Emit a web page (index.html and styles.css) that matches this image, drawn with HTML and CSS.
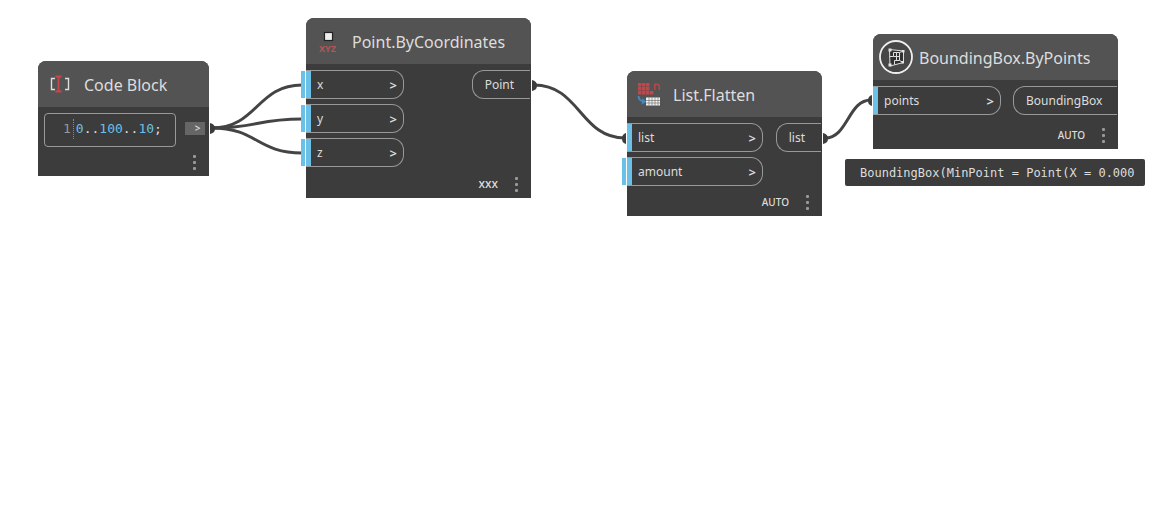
FILE: index.html
```html
<!DOCTYPE html>
<html lang="en">
<head>
<meta charset="utf-8">
<title>Graph</title>
<link rel="stylesheet" href="styles.css">
</head>
<body>
<main class="canvas">
  <svg class="wires" aria-hidden="true">
    <g class="wire">
      <path d="M212 128C257 128 257 85 302 85"/>
      <path d="M212 128C257 128 257 119 302 119"/>
      <path d="M212 128C257 128 257 153 302 153"/>
      <path d="M534 85C580 85 580 138 625 138"/>
      <path d="M825 138C848 138 848 100 871 100"/>
    </g>
    <g class="plug">
      <path d="M210 123q5 1 5 5.500t-5 5.500z"/>
      <path d="M532 80q5 1 5 5.500t-5 5.500z"/>
      <path d="M823 133q5 1 5 5.500t-5 5.500z"/>
      <path d="M626 133q-4 1-4 5.500t4 5.500z"/>
      <path d="M872 95q-4 1-4 5.500t4 5.500z"/>
    </g>
  </svg>

  <article class="node node-code">
    <header class="head">
      <svg class="icon" width="24" height="24" viewBox="0 0 24 24" aria-hidden="true">
        <path d="M7 6.500H3.500v11H7M17 6.500h3.500v11H17" fill="none" stroke="#ddd" stroke-width="1.400"/>
        <path d="M7.500 4.500h6M7.500 19.500h6M10.500 4.500v15" fill="none" stroke="#c8474a" stroke-width="1.800"/>
      </svg>
      <h2 class="title">Code Block</h2>
    </header>
    <div class="body">
      <div class="editor"><span class="line-no">1</span><code class="code"><b class="num">0</b>..<b class="num">100</b>..<b class="num">10</b>;</code></div>
      <button class="out-tab" aria-label="Output">&gt;</button>
    </div>
    <footer class="foot"><button class="more" aria-label="More"><i></i><i></i><i></i></button></footer>
  </article>

  <article class="node node-point">
    <header class="head">
      <svg class="icon" width="24" height="24" viewBox="0 0 24 24" aria-hidden="true">
        <rect x="8.500" y="3.500" width="8" height="8" fill="#eee" stroke="#222" stroke-width="1.200"/>
        <text x="3" y="23" class="xyz">XYZ</text>
      </svg>
      <h2 class="title">Point.ByCoordinates</h2>
    </header>
    <div class="body">
      <div class="ins">
        <div class="port in open"><span>x</span><span class="chevron">&gt;</span></div>
        <div class="port in open"><span>y</span><span class="chevron">&gt;</span></div>
        <div class="port in open"><span>z</span><span class="chevron">&gt;</span></div>
      </div>
      <div class="port out">Point</div>
    </div>
    <footer class="foot"><span class="lacing wide">xxx</span><button class="more" aria-label="More"><i></i><i></i><i></i></button></footer>
  </article>

  <article class="node node-flatten">
    <header class="head">
      <svg class="icon" width="24" height="24" viewBox="0 0 24 24" aria-hidden="true">
        <path fill="#c0474a" d="M1 1h3.400v3.400H1zM5 1h3.400v3.400H5zM9 1h3.400v3.400H9zM1 5h3.400v3.400H1zM5 5h3.400v3.400H5zM9 5h3.400v3.400H9zM1 9h3.400v3.400H1zM5 9h3.400v3.400H5zM9 9h3.400v3.400H9zM13 9h3.400v3.400H13z"/>
        <path d="M17.800 8V1.500M17.800 4Q18.300 2.200 20.200 2.200T22.300 4.500V8" fill="none" stroke="#b5484b" stroke-width="1.500"/>
        <path d="M1.500 14q.5 5 5 5.500" fill="none" stroke="#4387bd" stroke-width="2"/>
        <path d="M5.500 16L9.500 20L4.500 22.500z" fill="#4387bd"/>
        <path d="M9 15.500h14v8H9z" fill="#f2f2f2"/>
        <path d="M9 18.500h14M9 21h14M12 15.500v8M15 15.500v8M18 15.500v8M21 15.500v8" stroke="#777" stroke-width=".7"/>
      </svg>
      <h2 class="title">List.Flatten</h2>
    </header>
    <div class="body">
      <div class="ins">
        <div class="port in"><span>list</span><span class="chevron">&gt;</span></div>
        <div class="port in open"><span>amount</span><span class="chevron">&gt;</span></div>
      </div>
      <div class="port out">list</div>
    </div>
    <footer class="foot"><span class="lacing">AUTO</span><button class="more" aria-label="More"><i></i><i></i><i></i></button></footer>
  </article>

  <article class="node node-box">
    <header class="head">
      <svg class="icon" width="36" height="36" viewBox="0 0 36 36" aria-hidden="true">
        <circle cx="18" cy="18" r="16" fill="#464646" stroke="#eee" stroke-width="1.800"/>
        <g fill="none" stroke="#ddd" stroke-width="1">
          <path d="M11.500 10.500L25.500 12V23.500L12 27z" fill="#303030"/>
          <path d="M11.500 17.500h4v-4h6v8h-5v4M21.500 13.500L25.500 12M21.500 21.500L25.500 23.500M18.500 13.500v8M15.500 17.500h6"/>
        </g>
        <path d="M10.500 9.500h3v3h-3zM10.500 24.500h3v3h-3zM24 11h2.500v2.500h-2.500zM23.500 22h2.500v2.500h-2.500z" fill="#e4e4e4"/>
      </svg>
      <h2 class="title">BoundingBox.ByPoints</h2>
    </header>
    <div class="body">
      <div class="ins">
        <div class="port in"><span>points</span><span class="chevron">&gt;</span></div>
      </div>
      <div class="port out">BoundingBox</div>
    </div>
    <footer class="foot"><span class="lacing">AUTO</span><button class="more" aria-label="More"><i></i><i></i><i></i></button></footer>
  </article>

  <output class="preview">BoundingBox(MinPoint = Point(X = 0.000</output>
</main>
</body>
</html>
```
FILE: styles.css
```css
* { box-sizing: border-box; }

body {
  margin: 0;
  background: #fff;
  color: #ddd;
  font-family: "Noto Sans", sans-serif;
}

button {
  border: 0;
  padding: 0;
  color: inherit;
  font: inherit;
}

.canvas {
  position: relative;
  min-height: 100vh;
  overflow: hidden;
}

.wires {
  position: absolute;
  inset: 0;
  width: 100%;
  height: 100%;
}

.wire { fill: none; stroke: #444; stroke-width: 3; }
.plug { fill: #3c3c3c; }

.node {
  position: absolute;
  display: flex;
  flex-direction: column;
  background: #3c3c3c;
  border-radius: 8px 8px 0 0;
}

.node-code { left: 38px; top: 61px; width: 171px; }
.node-point { left: 306px; top: 18px; width: 225px; }
.node-flatten { left: 627px; top: 71px; width: 195px; }
.node-box { left: 873px; top: 34px; width: 245px; }

.head {
  display: flex;
  align-items: center;
  gap: 12px;
  height: 46px;
  padding: 0 10px;
  background: #535353;
  border-radius: 8px 8px 0 0;
}

.node-box .head { gap: 5px; padding: 0 5px; }

.icon {
  flex: none;
  overflow: visible;
}

.xyz {
  fill: #b35658;
  font: bold 9px "Noto Sans", sans-serif;
}

.title {
  margin: 0;
  padding-top: 2px;
  font-size: 16px;
  font-weight: 400;
  line-height: 24px;
  white-space: nowrap;
}

.body {
  display: flex;
  align-items: flex-start;
  justify-content: space-between;
  gap: 12px;
  padding: 6px 1px 3px 0;
}

.node-flatten .body { padding-bottom: 2px; }
.node-box .body { padding-bottom: 6px; }

.node-code .body {
  gap: 9px;
  padding: 6px 4px 1px 6px;
}

.ins {
  display: grid;
  gap: 5px;
}

.port {
  display: flex;
  align-items: center;
  justify-content: space-between;
  height: 29px;
  border: 1px solid #999;
  font-size: 12px;
  line-height: 16px;
}

.in {
  position: relative;
  padding: 0 6px 0 11px;
  border-left: 0;
  border-radius: 0 12px 12px 0;
}

.node-point .in { width: 98px; }
.node-flatten .in { width: 136px; }
.node-box .in { width: 128px; }

.in::before,
.open::after {
  content: "";
  position: absolute;
  top: 0;
  bottom: 0;
  left: 0;
  width: 5px;
  background: #6ac0e7;
}

.open::after {
  left: -5px;
  width: 4px;
}

.chevron {
  font-size: 13px;
  font-weight: 600;
}

.out {
  padding: 0 16px 0 12px;
  border-right: 0;
  border-radius: 12px 0 0 12px;
}

.node-box .out { padding-right: 15px; }

.editor {
  display: flex;
  flex: 1;
  align-items: center;
  height: 34px;
  padding: 0 0 2px 18px;
  border: 1px solid #999;
  border-radius: 4px;
  font: 13px/20px "DejaVu Sans Mono", monospace;
}

.line-no {
  padding-right: 2px;
  border-right: 1px dotted #888;
  color: #999;
}

.code {
  padding-left: 2px;
  font: inherit;
}

.num {
  color: #6ac0e7;
  font-weight: 400;
}

.out-tab {
  width: 20px;
  height: 13px;
  margin-top: 9px;
  padding-left: 5px;
  background: #666;
  font-size: 10px;
  font-weight: 600;
  line-height: 13px;
}

.foot {
  display: flex;
  align-items: center;
  justify-content: flex-end;
  gap: 17px;
  height: 28px;
  padding-right: 13px;
}

.lacing {
  font-size: 10px;
  font-weight: 500;
  line-height: 16px;
}

.wide { font-size: 12px; }

.more {
  display: grid;
  gap: 3px;
  background: none;
}

.more i {
  width: 3px;
  height: 3px;
  border-radius: 1px;
  background: #999;
}

.preview {
  position: absolute;
  left: 845px;
  top: 159px;
  width: 300px;
  padding: 6px 12px 4px 15px;
  background: #3c3c3c;
  border-radius: 2px;
  font: 12px/17px "DejaVu Sans Mono", monospace;
  white-space: nowrap;
}
```
